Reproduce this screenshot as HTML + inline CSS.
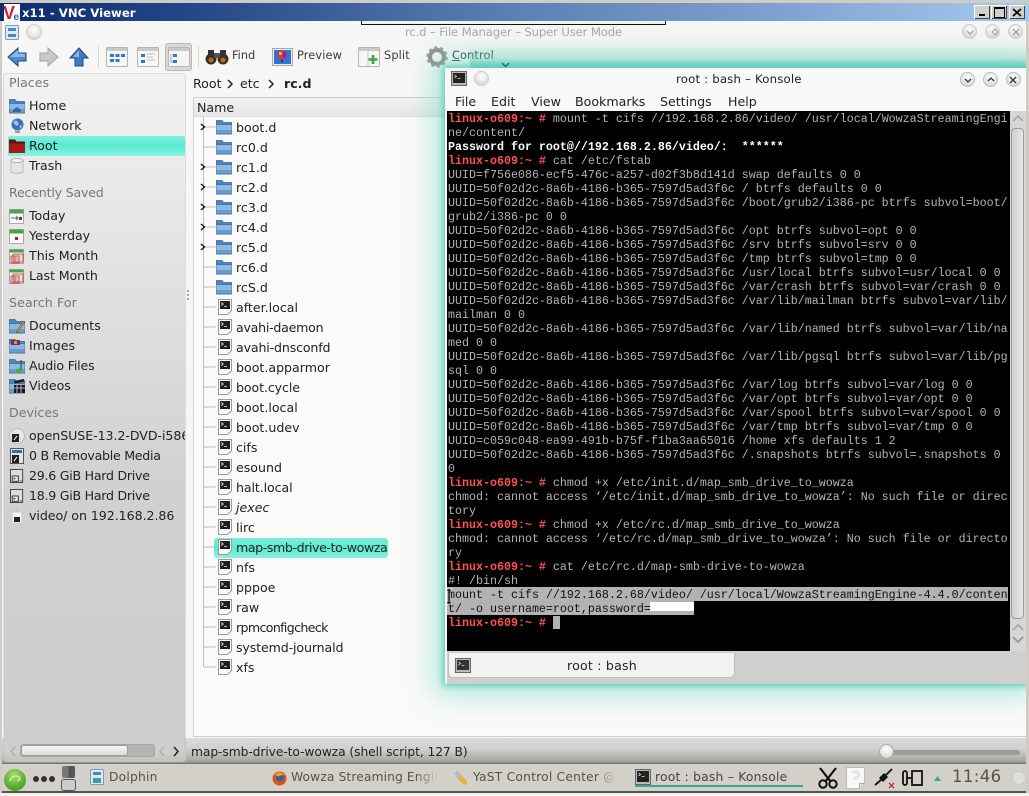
<!DOCTYPE html>
<html><head><meta charset="utf-8"><title>x11 - VNC Viewer</title>
<style>
html,body{margin:0;padding:0;width:1029px;height:796px;overflow:hidden;background:#f4f4f2}
body{position:relative;font-family:"DejaVu Sans","Liberation Sans",sans-serif;font-size:12.6px;color:#222}
.a{position:absolute}
.t{position:absolute;white-space:nowrap;line-height:20px;height:20px;margin-top:1px}
.h{color:#77757a}
svg{position:absolute;overflow:visible}
#term{position:absolute;left:447px;top:111px;width:563px;height:540px;background:#000;overflow:hidden}
#term pre{margin:0;position:absolute;left:1px;top:1px;font:11.67px/14px "Liberation Mono",monospace;color:#b4b4b4;white-space:pre}
#term b.r{color:#ff5454;font-weight:bold}
#term b.w{color:#fff;font-weight:bold}
.sel{position:absolute;background:#b2b2b2}
.tb{position:absolute;white-space:nowrap;line-height:20px;color:#3a3a3a}
.m{position:absolute;top:92px;line-height:20px;white-space:nowrap;color:#222}
#files{position:absolute;left:236px;top:118px;line-height:20px;white-space:nowrap}
#files div{height:20px}
#tree{position:absolute;left:203px;top:117px}
.orb{position:absolute;width:16px;height:16px;border-radius:50%;background:radial-gradient(circle at 50% 35%,#fff,#e2e2e0 60%,#bdbdbb);box-shadow:0 0 0 1px #ccc}
</style></head><body>
<svg width="0" height="0" style="position:absolute">
<defs>
<symbol id="folder" viewBox="0 0 16 16"><path d="M0 1.5h6l1.500 2H16V15H0z" fill="#4f84bd" stroke="#3a6a9e" stroke-width=".7"/><path d="M0 5.500h16V15H0z" fill="#8db8e0" stroke="#3a6a9e" stroke-width=".7"/><rect x=".5" y="11" width="15" height="3.500" fill="#6a9ccc"/></symbol>
<symbol id="script" viewBox="0 0 14 16"><path d="M.5.5h13v11l-4 4H.5z" fill="#fbfbfb" stroke="#9a9a9a"/><rect x="2" y="2" width="10" height="8" fill="#1d1d1d"/><path d="M3.200 3.500l2 1.500-2 1.500M6 7.600h3" fill="none" stroke="#eee" stroke-width=".8"/></symbol>
<symbol id="cal" viewBox="0 0 16 16"><rect x=".5" y="1.500" width="14" height="14" fill="#fafafa" stroke="#aaa"/><rect x=".5" y="1.500" width="14" height="4" fill="#4aa34a"/></symbol>
<symbol id="calm" viewBox="0 0 16 16"><rect x=".5" y="1.500" width="14" height="14" fill="#fafafa" stroke="#aaa"/><rect x=".5" y="1.500" width="14" height="3" fill="#4aa34a"/><path d="M4 6h10v8H4zM2 8h8v7H2z" fill="#f6dede" stroke="#b03030" stroke-width=".8"/><path d="M4 10h5M4 12h5M6 8v6" stroke="#b03030" stroke-width=".6"/></symbol>
<symbol id="drive" viewBox="0 0 16 16"><rect x=".5" y=".5" width="14" height="15" fill="#dcdcda" stroke="#333"/><rect x="2.500" y="8" width="7" height="6" fill="#eee" stroke="#222"/><path d="M4 11h3M5 10l-1 1 1 1" stroke="#222" fill="none" stroke-width=".7"/><rect x="11" y="13" width="3" height="1.400" fill="#4aa34a"/></symbol>
<symbol id="view" viewBox="0 0 22 20"><rect x=".5" y=".5" width="21" height="19" rx="1" fill="#f6f6f4" stroke="#b5b5b3"/><rect x="1" y="1" width="20" height="3" fill="#c9c9c7"/></symbol>
</defs>
</svg>

<!-- VNC frame -->
<div class="a" style="left:0;top:0;width:1029px;height:3px;background:#cfccc6"></div>
<div class="a" style="left:0;top:3px;width:1029px;height:18px;background:linear-gradient(90deg,#0b2a70 0,#27498a 20%,#5c80b4 50%,#7ea0cf 75%,#a6caf0 100%)"></div>
<svg style="left:4px;top:4px" width="16" height="17" viewBox="0 0 16 17"><rect width="16" height="17" fill="#fff"/><text x="-1" y="15" font-family="Liberation Sans" font-size="18" font-weight="bold" fill="#d8202a">V</text><text x="9.500" y="16" font-family="Liberation Sans" font-size="10" font-weight="bold" fill="#2a6fb8">e</text></svg>
<div class="t" style="left:22px;top:2px;color:#fff;font:bold 11.7px/20px 'DejaVu Sans',sans-serif">x11 - VNC Viewer</div>
<div class="a" style="left:974px;top:5px;width:16px;height:14px;background:#d4d0c8;box-shadow:inset 1px 1px #fff,inset -1px -1px #444"></div>
<div class="a" style="left:979px;top:14px;width:6px;height:2px;background:#000"></div>
<div class="a" style="left:991px;top:5px;width:16px;height:14px;background:#d4d0c8;box-shadow:inset 1px 1px #fff,inset -1px -1px #444"></div>
<div class="a" style="left:994px;top:7px;width:9px;height:8px;border:1px solid #000;border-top-width:2px"></div>
<div class="a" style="left:1009px;top:5px;width:16px;height:14px;background:#d4d0c8;box-shadow:inset 1px 1px #fff,inset -1px -1px #444"></div>
<svg style="left:1012px;top:8px" width="10" height="9"><path d="M1 1l8 7M9 1L1 8" stroke="#000" stroke-width="1.700"/></svg>
<div class="a" style="left:0;top:21px;width:2px;height:775px;background:#cfccc6"></div>

<!-- Dolphin window -->
<div class="a" style="left:2px;top:21px;width:1024px;height:742px;background:#f6f6f4"></div>
<div class="a" style="left:361px;top:21px;width:305px;height:4px;border:1px solid #111;border-top:0;box-sizing:border-box;background:#f2f2f0"></div>
<svg style="left:5px;top:25px" width="14" height="15" viewBox="0 0 14 15"><rect x=".5" y=".5" width="13" height="14" rx="1" fill="#dfe9f3" stroke="#7b9cc0"/><rect x="3" y="3" width="8" height="3" fill="#4a86c0"/><rect x="3" y="9" width="8" height="3" fill="#4a86c0"/></svg>
<div class="orb" style="left:27px;top:25px;width:14px;height:14px"></div>
<div class="t" style="left:405px;top:21px;color:#a8a8a8;letter-spacing:-.17px;font-size:11.7px">rc.d – File Manager – Super User Mode</div>
<div class="orb" style="left:963px;top:25px;width:13px;height:13px"></div>
<div class="orb" style="left:986px;top:25px;width:13px;height:13px"></div>
<div class="orb" style="left:1009px;top:25px;width:13px;height:13px"></div>
<svg style="left:963px;top:25px" width="60" height="14"><path d="M4 6l3 3 3-3" fill="none" stroke="#999" stroke-width="1.200"/><path d="M29 7l3-3 3 3-3 3z" fill="none" stroke="#999"/><path d="M50 4l6 6M56 4l-6 6" stroke="#999" stroke-width="1.200"/></svg>

<!-- toolbar -->
<svg style="left:7px;top:47px" width="84" height="20" viewBox="0 0 84 20"><path d="M1 10L11 1v5h8v8h-8v5z" fill="#4f88c8" stroke="#1c4a86"/><path d="M2.500 10L11 3v3.500h7V10z" fill="#8ab7e4"/><path d="M51 10L41 1v5h-8v8h8v5z" fill="#c8c8c6" stroke="#a3a3a1"/><path d="M72 1l9 10h-5v8h-8v-8h-5z" fill="#3f7cc0" stroke="#1c4a86"/><path d="M72 3l-6 7h6z" fill="#8ab7e4"/></svg>
<div class="a" style="left:98px;top:46px;width:1px;height:22px;background:#d8d8d6"></div>
<svg style="left:106px;top:47px" width="22" height="20"><use href="#view" width="22" height="20"/><path d="M4 7h4v3H4zM9.500 7h4v3h-4zM15 7h4v3h-4zM4 12h4v3H4zM9.500 12h4v3h-4z" fill="#2f78d0"/></svg>
<svg style="left:137px;top:47px" width="22" height="20"><use href="#view" width="22" height="20"/><path d="M4 7h4v3H4zM4 13h4v3H4z" fill="#2f78d0"/><path d="M10 7h8M10 10h6M10 13h8" stroke="#bbb"/></svg>
<div class="a" style="left:165px;top:43px;width:27px;height:28px;background:#d8d8d6;border:1px solid #b8b8b6;border-radius:3px;box-sizing:border-box"></div>
<svg style="left:168px;top:47px" width="22" height="20"><use href="#view" width="22" height="20"/><path d="M5 7h4v3H5zM5 13h4v3H5z" fill="#2f78d0"/><path d="M3 7v8h2" stroke="#999" fill="none"/></svg>
<div class="a" style="left:198px;top:46px;width:1px;height:22px;background:#d8d8d6"></div>
<svg style="left:205px;top:49px" width="24" height="16" viewBox="0 0 24 16"><circle cx="6" cy="10" r="5.500" fill="#3a2e22"/><circle cx="18" cy="10" r="5.500" fill="#3a2e22"/><circle cx="6" cy="11" r="2.500" fill="#b86a20"/><circle cx="18" cy="11" r="2.500" fill="#b86a20"/><rect x="3" y="1" width="6" height="6" fill="#333"/><rect x="15" y="1" width="6" height="6" fill="#333"/><rect x="9" y="4" width="6" height="5" fill="#555"/></svg>
<div class="tb" style="left:232px;top:46px;font-size:11.3px">Find</div>
<svg style="left:272px;top:48px" width="21" height="18" viewBox="0 0 21 18"><rect x=".5" y=".5" width="20" height="17" fill="#eee" stroke="#aaa"/><rect x="2" y="2" width="17" height="14" fill="#2f74d0"/><circle cx="10" cy="7" r="5" fill="#c8326a"/><path d="M7 4h3v3H7z" fill="#e8b030"/><path d="M11 4h3v5h-3z" fill="#6a3aa0"/><rect x="9" y="12" width="2" height="2" fill="#432"/></svg>
<div class="tb" style="left:297px;top:46px;font-size:11.3px;letter-spacing:.15px">Preview</div>
<svg style="left:358px;top:47px" width="22" height="20"><use href="#view" width="22" height="20"/><path d="M10 .5v19" stroke="#c8c8c6"/><path d="M15 8v9M10.500 12.500h9" stroke="#3aa83a" stroke-width="2.600"/></svg>
<div class="tb" style="left:384px;top:46px;font-size:11.3px;letter-spacing:.15px">Split</div>
<svg style="left:426px;top:46px" width="22" height="22" viewBox="0 0 22 22"><circle cx="11" cy="11" r="7" fill="none" stroke="#8f8f8d" stroke-width="4"/><circle cx="11" cy="11" r="9.500" fill="none" stroke="#9c9c9a" stroke-width="2.500" stroke-dasharray="3 2.970"/><circle cx="11" cy="11" r="4.500" fill="none" stroke="#e8e8e6"/></svg>
<div class="tb" style="left:452px;top:46px;font-size:11.3px;letter-spacing:.15px"><u>C</u>ontrol</div>

<!-- sidebar -->
<div class="a" style="left:3px;top:73px;width:183px;height:689px;border:1px solid #dcdcda;border-bottom:0;border-radius:4px 4px 0 0;box-sizing:border-box;background:linear-gradient(180deg,#f2f2f0 0,#e4e4e2 25%,#d2d1cf 60%,#cdcccb 100%)"></div>
<div class="a" style="left:187px;top:290px;width:2px;height:10px;border-left:2px dotted #a5a5a3"></div>
<div class="a" style="left:8px;top:136px;width:177px;height:20px;border-radius:2px;background:linear-gradient(180deg,#7df0dc,#5ae8d0 50%,#8af2e0)"></div>
<div class="t h" style="left:9px;top:72px">Places</div>
<div class="t" style="left:29px;top:95px">Home</div>
<div class="t" style="left:29px;top:115px">Network</div>
<div class="t" style="left:29px;top:135px">Root</div>
<div class="t" style="left:29px;top:155px">Trash</div>
<div class="t h" style="left:9px;top:182px;letter-spacing:-.2px">Recently Saved</div>
<div class="t" style="left:29px;top:205px">Today</div>
<div class="t" style="left:29px;top:225px">Yesterday</div>
<div class="t" style="left:29px;top:245px">This Month</div>
<div class="t" style="left:29px;top:265px;letter-spacing:-.1px">Last Month</div>
<div class="t h" style="left:9px;top:292px;letter-spacing:.1px">Search For</div>
<div class="t" style="left:29px;top:315px">Documents</div>
<div class="t" style="left:29px;top:335px">Images</div>
<div class="t" style="left:29px;top:355px;letter-spacing:-.18px">Audio Files</div>
<div class="t" style="left:29px;top:375px">Videos</div>
<div class="t h" style="left:9px;top:402px">Devices</div>
<div class="t" style="left:29px;top:425px;width:156px;overflow:hidden;letter-spacing:-.06px">openSUSE-13.2-DVD-i586</div>
<div class="t" style="left:29px;top:445px;letter-spacing:-.27px">0 B Removable Media</div>
<div class="t" style="left:29px;top:465px;letter-spacing:-.26px">29.6 GiB Hard Drive</div>
<div class="t" style="left:29px;top:485px;letter-spacing:-.26px">18.9 GiB Hard Drive</div>
<div class="t" style="left:29px;top:505px;letter-spacing:-.05px">video/ on 192.168.2.86</div>

<svg style="left:9px;top:98px" width="16" height="16"><use href="#folder" width="16" height="16"/><path d="M4 12l4-3 4 3v2H4z" fill="#2f6aa8"/></svg>
<svg style="left:10px;top:118px" width="15" height="15" viewBox="0 0 15 15"><circle cx="7.500" cy="6.500" r="6" fill="#3a70b8"/><path d="M3 4q3-3 5 0t-2 4zM9 8l3-1-1 4z" fill="#9ac0e8"/><rect x="5" y="13" width="5" height="2" fill="#999"/></svg>
<svg style="left:9px;top:138px" width="16" height="16" viewBox="0 0 16 16"><path d="M0 1.500h6l1.500 2H16V15H0z" fill="#6a0c0c"/><path d="M0 5.500h16V15H0z" fill="#a81818"/></svg>
<svg style="left:10px;top:158px" width="14" height="16" viewBox="0 0 14 16"><path d="M1 2h12v12q-6 3-12 0z" fill="#e6e6e4" stroke="#aaa" stroke-width=".7"/><ellipse cx="7" cy="2.500" rx="6" ry="2" fill="#f5f5f5" stroke="#999" stroke-width=".7"/></svg>
<svg style="left:9px;top:208px" width="16" height="16"><use href="#cal" width="16" height="16"/><path d="M2 10h7M7 8l2 2-2 2" stroke="#2a70c0" fill="none"/><rect x="10" y="9" width="3" height="3" fill="#b02020"/></svg>
<svg style="left:9px;top:228px" width="16" height="16"><use href="#cal" width="16" height="16"/><rect x="6" y="9" width="3" height="3" fill="#b02020"/></svg>
<svg style="left:9px;top:248px" width="16" height="16"><use href="#calm" width="16" height="16"/></svg>
<svg style="left:9px;top:268px" width="16" height="16"><use href="#calm" width="16" height="16"/></svg>
<svg style="left:9px;top:318px" width="16" height="16"><use href="#folder" width="16" height="16"/><path d="M7 14l7-11 1.500 1-7 11z" fill="#d8a020" stroke="#333" stroke-width=".5"/></svg>
<svg style="left:9px;top:338px" width="16" height="16"><use href="#folder" width="16" height="16"/><rect x="2" y="2" width="9" height="5" fill="#7a2a60"/><rect x="5" y="3" width="3" height="3" fill="#d8a020"/></svg>
<svg style="left:9px;top:358px" width="16" height="16"><use href="#folder" width="16" height="16"/><path d="M12 2v10" stroke="#2a6a2a" stroke-width="1.300"/><ellipse cx="10" cy="12.500" rx="3" ry="2" fill="#4ab030"/></svg>
<svg style="left:9px;top:378px" width="16" height="16"><use href="#folder" width="16" height="16"/><rect x="5" y="7" width="11" height="8" fill="#1a1a1a"/><path d="M5 3l10-2 .7 2.500-10 2z" fill="#1a1a1a"/><path d="M5 10h11M8 7v8M12 7v8" stroke="#ddd" stroke-width=".8"/></svg>
<svg style="left:9px;top:428px" width="16" height="16" viewBox="0 0 16 16"><circle cx="8" cy="8" r="7.500" fill="#e6e6e6" stroke="#bbb"/><rect x="3" y="6" width="7" height="8" fill="#222"/><path d="M5 12l3-4" stroke="#fff"/></svg>
<svg style="left:10px;top:448px" width="14" height="16" viewBox="0 0 14 16"><rect x=".5" y=".5" width="13" height="15" fill="#e4e4e2" stroke="#555"/><rect x="2" y="2" width="10" height="3" fill="#2a6fb8"/><rect x="2" y="7" width="7" height="8" fill="#222"/><path d="M4 13l3-4" stroke="#fff"/></svg>
<svg style="left:10px;top:468px" width="14" height="16"><use href="#drive" width="14" height="16"/></svg>
<svg style="left:10px;top:488px" width="14" height="16"><use href="#drive" width="14" height="16"/></svg>
<svg style="left:11px;top:508px" width="12" height="16" viewBox="0 0 12 16"><rect x="4" y="0" width="3" height="4" fill="#c8c8c6"/><rect x="1" y="4" width="10" height="11" fill="#f4f4f2" stroke="#ccc"/><rect x="3" y="9" width="6" height="5" fill="#222"/></svg>

<!-- file view -->
<div class="t" style="left:193px;top:73px">Root</div>
<svg style="left:226px;top:79px" width="60" height="10"><path d="M2 1l4 4-4 4M43 1l4 4-4 4" fill="none" stroke="#222" stroke-width="1.500"/></svg>
<div class="t" style="left:240px;top:73px">etc</div>
<div class="t" style="left:284px;top:73px;font-weight:bold">rc.d</div>
<div class="a" style="left:193px;top:97px;width:834px;height:640px;background:#fafaf8;border:1px solid #cfcfcd;box-sizing:border-box"></div>
<div class="a" style="left:194px;top:98px;width:832px;height:19px;background:linear-gradient(#f2f2f0,#e6e6e4);border-bottom:1px solid #ddd;box-sizing:border-box"></div>
<div class="t" style="left:197px;top:97px">Name</div>
<svg id="tree" width="30" height="560" style="left:200px;top:117px">
<path d="M3.500 0V550M4 10h12M4 30h12M4 50h12M4 70h12M4 90h12M4 110h12M4 130h12M4 150h12M4 170h12M4 190h12M4 210h12M4 230h12M4 250h12M4 270h12M4 290h12M4 310h12M4 330h12M4 350h12M4 370h12M4 390h12M4 410h12M4 430h12M4 450h12M4 470h12M4 490h12M4 510h12M4 530h12M4 550h12" stroke="#bdbdbb" fill="none"/>
<g fill="none" stroke="#111" stroke-width="1.400"><path d="M1 7l3.500 3L1 13"/><path d="M1 47l3.500 3L1 53"/><path d="M1 67l3.500 3L1 73"/><path d="M1 87l3.500 3L1 93"/><path d="M1 107l3.500 3L1 113"/><path d="M1 127l3.500 3L1 133"/></g>
</svg>
<svg style="left:216px;top:117px" width="16" height="180">
<use href="#folder" y="2" width="16" height="16"/><use href="#folder" y="22" width="16" height="16"/><use href="#folder" y="42" width="16" height="16"/><use href="#folder" y="62" width="16" height="16"/><use href="#folder" y="82" width="16" height="16"/><use href="#folder" y="102" width="16" height="16"/><use href="#folder" y="122" width="16" height="16"/><use href="#folder" y="142" width="16" height="16"/><use href="#folder" y="162" width="16" height="16"/>
</svg>
<div class="a" style="left:214px;top:538px;width:174px;height:20px;border-radius:3px;background:linear-gradient(180deg,#7df0dc,#5ae8d0 50%,#8af2e0)"></div>
<svg style="left:218px;top:297px" width="14" height="380">
<use href="#script" y="2" width="14" height="16"/><use href="#script" y="22" width="14" height="16"/><use href="#script" y="42" width="14" height="16"/><use href="#script" y="62" width="14" height="16"/><use href="#script" y="82" width="14" height="16"/><use href="#script" y="102" width="14" height="16"/><use href="#script" y="122" width="14" height="16"/><use href="#script" y="142" width="14" height="16"/><use href="#script" y="162" width="14" height="16"/><use href="#script" y="182" width="14" height="16"/><use href="#script" y="202" width="14" height="16"/><use href="#script" y="222" width="14" height="16"/><use href="#script" y="242" width="14" height="16"/><use href="#script" y="262" width="14" height="16"/><use href="#script" y="282" width="14" height="16"/><use href="#script" y="302" width="14" height="16"/><use href="#script" y="322" width="14" height="16"/><use href="#script" y="342" width="14" height="16"/><use href="#script" y="362" width="14" height="16"/>
</svg>
<div id="files">
<div>boot.d</div><div>rc0.d</div><div>rc1.d</div><div>rc2.d</div><div>rc3.d</div><div>rc4.d</div><div>rc5.d</div><div>rc6.d</div><div>rcS.d</div><div>after.local</div><div style="letter-spacing:-.25px">avahi-daemon</div><div style="letter-spacing:-.15px">avahi-dnsconfd</div><div>boot.apparmor</div><div style="letter-spacing:-.1px">boot.cycle</div><div>boot.local</div><div>boot.udev</div><div>cifs</div><div>esound</div><div style="letter-spacing:-.1px">halt.local</div><div><i>jexec</i></div><div>lirc</div><div style="letter-spacing:-.41px">map-smb-drive-to-wowza</div><div>nfs</div><div>pppoe</div><div>raw</div><div style="letter-spacing:-.65px">rpmconfigcheck</div><div style="letter-spacing:-.13px">systemd-journald</div><div>xfs</div>
</div>

<!-- status bar -->
<div class="a" style="left:2px;top:738px;width:1024px;height:25px;background:linear-gradient(180deg,#dcdcda 0,#cfcfcd 45%,#a8a8a6 90%,#8e8e8c 100%)"></div>
<div class="a" style="left:3px;top:738px;width:183px;height:24px;background:linear-gradient(180deg,#cdcccb,#d0cfcd 60%,#c2c1bf);border:1px solid #c5c5c3;border-top:0;box-sizing:border-box;border-radius:0 0 4px 4px"></div>
<div class="a" style="left:20px;top:744px;width:135px;height:13px;background:#b5b5b3;border-radius:3px;box-sizing:border-box;border:1px solid #a5a5a3"></div>
<div class="a" style="left:21px;top:745px;width:107px;height:11px;background:linear-gradient(#f6f6f4,#dcdcda);border:1px solid #9c9c9a;border-radius:3px;box-sizing:border-box"></div>
<svg style="left:8px;top:745px" width="176" height="12"><path d="M7 2L3 6.500 7 11" fill="none" stroke="#aaa" stroke-width="1.200"/><path d="M156 2l-4 4.500 4 4.500" fill="none" stroke="#aaa" stroke-width="1.200"/><path d="M166 2l4 4.500-4 4.500" fill="none" stroke="#222" stroke-width="1.500"/></svg>
<div class="t" style="left:191px;top:741px;letter-spacing:-.09px;font-size:12.3px">map-smb-drive-to-wowza (shell script, 127 B)</div>
<div class="a" style="left:887px;top:750px;width:133px;height:5px;background:#9a9a98;border-radius:3px"></div>
<div class="orb" style="left:880px;top:745px;width:13px;height:13px;box-shadow:0 0 0 1px #aaa"></div>

<!-- Konsole window -->
<div class="a" style="left:470px;top:44px;width:556px;height:24px;background:linear-gradient(180deg,rgba(95,200,181,0),rgba(95,200,181,.25) 60%,#5fc8b5)"></div>
<div class="a" style="left:445px;top:68px;width:581px;height:616px;background:#f8f8f6;box-shadow:0 0 6px 2px #5fd0bc,0 0 28px 9px rgba(110,215,195,.6)"></div>
<svg style="left:501px;top:62px" width="9" height="6"><path d="M1 1l3.500 3.500L8 1" fill="none" stroke="#1f6a60" stroke-width="1.300"/></svg>
<div class="a" style="left:1026px;top:21px;width:3px;height:775px;background:#cfccc6"></div>
<svg style="left:451px;top:71px" width="16" height="15" viewBox="0 0 16 15"><rect x=".5" y=".5" width="15" height="14" fill="#bbb" stroke="#666"/><rect x="2" y="2" width="12" height="10" fill="#222"/><path d="M3.500 4l2 1.500-2 1.500M6.500 7.500h3" stroke="#ddd" fill="none" stroke-width=".8"/></svg>
<div class="orb" style="left:475px;top:72px;width:13px;height:13px"></div>
<div class="t" style="left:676px;top:68px;font-size:11.7px;letter-spacing:.2px;color:#222">root : bash – Konsole</div>
<div class="orb" style="left:961px;top:73px;width:13px;height:13px;box-shadow:0 0 0 1px #bbb"></div>
<div class="orb" style="left:984px;top:73px;width:13px;height:13px;box-shadow:0 0 0 1px #bbb"></div>
<div class="orb" style="left:1007px;top:73px;width:13px;height:13px;box-shadow:0 0 0 1px #bbb"></div>
<svg style="left:961px;top:73px" width="60" height="14"><path d="M4 6l3 3 3-3M27 8l3-3 3 3" fill="none" stroke="#333" stroke-width="1.300"/><path d="M49 4l6 6M55 4l-6 6" stroke="#333" stroke-width="1.300"/></svg>
<div class="m" style="left:455px">File</div><div class="m" style="left:491px">Edit</div><div class="m" style="left:531px">View</div><div class="m" style="left:575px">Bookmarks</div><div class="m" style="left:660px">Settings</div><div class="m" style="left:728px">Help</div>

<div id="term">
<div class="sel" style="left:0;top:476px;width:561px;height:14px"></div>
<div class="sel" style="left:0;top:490px;width:247px;height:14px"></div>
<div class="a" style="left:203px;top:491px;width:44px;height:9px;background:#fff"></div>
<div class="a" style="left:106px;top:505px;width:7px;height:13px;background:#b2b2b2"></div>
<pre><b class="r">linux-o609:~ #</b> mount -t cifs //192.168.2.86/video/ /usr/local/WowzaStreamingEngi
ne/content/
<b class="w">Password for root@//192.168.2.86/video/:  ******</b>
<b class="r">linux-o609:~ #</b> cat /etc/fstab
UUID=f756e086-ecf5-476c-a257-d02f3b8d141d swap defaults 0 0
UUID=50f02d2c-8a6b-4186-b365-7597d5ad3f6c / btrfs defaults 0 0
UUID=50f02d2c-8a6b-4186-b365-7597d5ad3f6c /boot/grub2/i386-pc btrfs subvol=boot/
grub2/i386-pc 0 0
UUID=50f02d2c-8a6b-4186-b365-7597d5ad3f6c /opt btrfs subvol=opt 0 0
UUID=50f02d2c-8a6b-4186-b365-7597d5ad3f6c /srv btrfs subvol=srv 0 0
UUID=50f02d2c-8a6b-4186-b365-7597d5ad3f6c /tmp btrfs subvol=tmp 0 0
UUID=50f02d2c-8a6b-4186-b365-7597d5ad3f6c /usr/local btrfs subvol=usr/local 0 0
UUID=50f02d2c-8a6b-4186-b365-7597d5ad3f6c /var/crash btrfs subvol=var/crash 0 0
UUID=50f02d2c-8a6b-4186-b365-7597d5ad3f6c /var/lib/mailman btrfs subvol=var/lib/
mailman 0 0
UUID=50f02d2c-8a6b-4186-b365-7597d5ad3f6c /var/lib/named btrfs subvol=var/lib/na
med 0 0
UUID=50f02d2c-8a6b-4186-b365-7597d5ad3f6c /var/lib/pgsql btrfs subvol=var/lib/pg
sql 0 0
UUID=50f02d2c-8a6b-4186-b365-7597d5ad3f6c /var/log btrfs subvol=var/log 0 0
UUID=50f02d2c-8a6b-4186-b365-7597d5ad3f6c /var/opt btrfs subvol=var/opt 0 0
UUID=50f02d2c-8a6b-4186-b365-7597d5ad3f6c /var/spool btrfs subvol=var/spool 0 0
UUID=50f02d2c-8a6b-4186-b365-7597d5ad3f6c /var/tmp btrfs subvol=var/tmp 0 0
UUID=c059c048-ea99-491b-b75f-f1ba3aa65016 /home xfs defaults 1 2
UUID=50f02d2c-8a6b-4186-b365-7597d5ad3f6c /.snapshots btrfs subvol=.snapshots 0
0
<b class="r">linux-o609:~ #</b> chmod +x /etc/init.d/map_smb_drive_to_wowza
chmod: cannot access ‘/etc/init.d/map_smb_drive_to_wowza’: No such file or direc
tory
<b class="r">linux-o609:~ #</b> chmod +x /etc/rc.d/map_smb_drive_to_wowza
chmod: cannot access ‘/etc/rc.d/map_smb_drive_to_wowza’: No such file or directo
ry
<b class="r">linux-o609:~ #</b> cat /etc/rc.d/map-smb-drive-to-wowza
#! /bin/sh
<span style="color:#111">mount -t cifs //192.168.2.68/video/ /usr/local/WowzaStreamingEngine-4.4.0/conten
t/ -o username=root,password=</span>
<b class="r">linux-o609:~ #</b></pre>
</div>
<svg style="left:446px;top:589px" width="6" height="16"><path d="M1 1h4M3 1v13M1 14h4" stroke="#000" stroke-width="1.200"/><path d="M0 0h2M4 0h2M0 15h2M4 15h2" stroke="#fff"/></svg>

<!-- scrollbar -->
<div class="a" style="left:1010px;top:111px;width:16px;height:540px;background:#d6d6d4"></div>
<svg style="left:1012px;top:114px" width="12" height="10"><path d="M1 7l5-5 5 5" fill="none" stroke="#a0a0a0" stroke-width="1.500"/></svg>
<div class="a" style="left:1011px;top:128px;width:13px;height:491px;background:linear-gradient(90deg,#d0d0ce,#e6e6e4);border:1px solid #9a9a98;border-radius:4px;box-sizing:border-box"></div>
<svg style="left:1012px;top:622px" width="12" height="24"><path d="M1 8l5-5 5 5" fill="none" stroke="#a0a0a0" stroke-width="1.500"/><path d="M1 15l5 5 5-5" fill="none" stroke="#8a8a8a" stroke-width="1.500"/></svg>

<!-- tab bar -->
<div class="a" style="left:447px;top:651px;width:579px;height:33px;background:#cfcfcd"></div>
<div class="a" style="left:448px;top:653px;width:287px;height:25px;background:#f2f2f0;border:1px solid #bdbdbb;border-top:0;border-radius:0 0 5px 5px;box-sizing:border-box"></div>
<svg style="left:455px;top:658px" width="16" height="15" viewBox="0 0 16 15"><rect x=".5" y=".5" width="15" height="14" fill="#bbb" stroke="#666"/><rect x="2" y="2" width="12" height="10" fill="#333"/><path d="M3.500 4l2 1.500-2 1.500M6.500 7.500h3" stroke="#ddd" fill="none" stroke-width=".8"/></svg>
<div class="t" style="left:567px;top:655px;letter-spacing:.2px">root : bash</div>

<!-- taskbar -->
<div class="a" style="left:2px;top:763px;width:1024px;height:30px;background:#d3d0c9;border-top:1px solid #777;border-bottom:2px solid #55534f;box-sizing:border-box"></div>
<div class="a" style="left:4px;top:769px;width:22px;height:22px;border-radius:50%;background:radial-gradient(circle at 45% 30%,#a8e070,#5db030 55%,#3a8a20)"></div>
<svg style="left:9px;top:775px" width="12" height="8"><path d="M1 6q1-5 6-5 4 0 4 3-1 2-3 1" fill="none" stroke="#e0f4c8" stroke-width="1.100"/></svg>
<div class="a" style="left:33px;top:776px;width:6px;height:6px;border-radius:50%;background:#333;box-shadow:8px 0 #333,16px 0 #333"></div>
<div class="a" style="left:62px;top:766px;width:13px;height:12px;border-radius:2px;background:linear-gradient(90deg,#777 50%,#555 50%)"></div>
<div class="a" style="left:61px;top:779px;width:15px;height:12px;border-radius:3px;border:1px solid #555;box-sizing:border-box;background:#ccc"></div>
<svg style="left:90px;top:769px" width="14" height="16" viewBox="0 0 14 16"><rect x=".5" y=".5" width="13" height="15" rx="1" fill="#dfe9f3" stroke="#7b9cc0"/><rect x="3" y="3" width="8" height="3" fill="#4a86c0"/><rect x="3" y="9" width="8" height="5" fill="#3aa090"/></svg>
<div class="t" style="left:109px;top:766px;color:#55534f;letter-spacing:.2px;font-size:12.3px">Dolphin</div>
<svg style="left:272px;top:771px" width="15" height="15" viewBox="0 0 15 15"><circle cx="7.500" cy="7.500" r="7" fill="#d8561c"/><circle cx="8" cy="6.500" r="4" fill="#3a5ea8"/><path d="M3 3q5-4 10 2-3-2-5 0-3 1-5-2z" fill="#f0a020"/></svg>
<div class="t" style="left:291px;top:766px;color:#55534f;letter-spacing:.1px;font-size:12.3px;width:147px;overflow:hidden;-webkit-mask-image:linear-gradient(90deg,#000 85%,transparent)">Wowza Streaming Engine</div>
<svg style="left:453px;top:771px" width="17" height="15" viewBox="0 0 17 15"><path d="M1 2l4-2 3 4 6 6v3l-3 1-6-6z" fill="#e8b040"/><path d="M1 2l4-2 3 4-3 3z" fill="#a8c0e0"/></svg>
<div class="t" style="left:473px;top:766px;color:#55534f;letter-spacing:.2px;font-size:12.3px;width:142px;overflow:hidden;-webkit-mask-image:linear-gradient(90deg,#000 88%,transparent)">YaST Control Center @ linux</div>
<svg style="left:635px;top:769px" width="16" height="16" viewBox="0 0 16 16"><rect x=".5" y=".5" width="15" height="15" fill="#bbb" stroke="#666"/><rect x="2" y="2" width="12" height="11" fill="#222"/><path d="M3.500 4l2 1.500-2 1.500M6.500 7.500h3" stroke="#ddd" fill="none" stroke-width=".8"/></svg>
<div class="t" style="left:655px;top:766px;color:#444;letter-spacing:.22px;font-size:12.3px">root : bash – Konsole</div>
<div class="a" style="left:635px;top:785px;width:168px;height:2px;background:#35a898"></div>
<svg style="left:817px;top:767px" width="22" height="22" viewBox="0 0 22 22"><path d="M3 1l11 14M19 1L8 15" stroke="#111" stroke-width="2.200"/><circle cx="6" cy="17" r="3.700" fill="none" stroke="#111" stroke-width="2"/><circle cx="16" cy="17" r="3.700" fill="none" stroke="#111" stroke-width="2"/></svg>
<svg style="left:846px;top:767px" width="19" height="22" viewBox="0 0 19 22"><path d="M.5.500h18v16l-5 5H.5z" fill="#f8f8f6" stroke="#bbb"/><path d="M13.500 21.500v-5h5" fill="#ddd" stroke="#aaa"/><path d="M6 6q3-3 6 0t-3 5v2" fill="none" stroke="#e2e2e0" stroke-width="2.500"/></svg>
<svg style="left:874px;top:767px" width="21" height="22" viewBox="0 0 21 22"><path d="M1 18l6-5M12 8l6-6" stroke="#111" stroke-width="1.800"/><path d="M5 11l5-5 4 4-5 5z" fill="#111"/><path d="M15 16l5 5M20 16l-5 5" stroke="#e02020" stroke-width="1.300"/></svg>
<svg style="left:902px;top:770px" width="21" height="16" viewBox="0 0 21 16"><rect x="1" y="1" width="4" height="14" rx="2" fill="none" stroke="#111" stroke-width="1.800"/><path d="M5 8h4" stroke="#111" stroke-width="1.800"/><rect x="10" y="1" width="10" height="14" fill="none" stroke="#111" stroke-width="1.800"/></svg>
<svg style="left:934px;top:776px" width="7" height="5"><path d="M0 5l3.500-5L7 5z" fill="#35a898"/></svg>
<div class="t" style="left:952px;top:766px;font-size:16.5px;line-height:20px;color:#55534f;letter-spacing:.4px">11:46</div>
<div class="a" style="left:1012px;top:771px;width:14px;height:14px;border-radius:50%;background:#dededc;border:1px solid #c8c8c6;box-sizing:border-box"></div>
<div class="a" style="left:0;top:793px;width:1029px;height:3px;background:#f2f2f0"></div>
</body></html>
